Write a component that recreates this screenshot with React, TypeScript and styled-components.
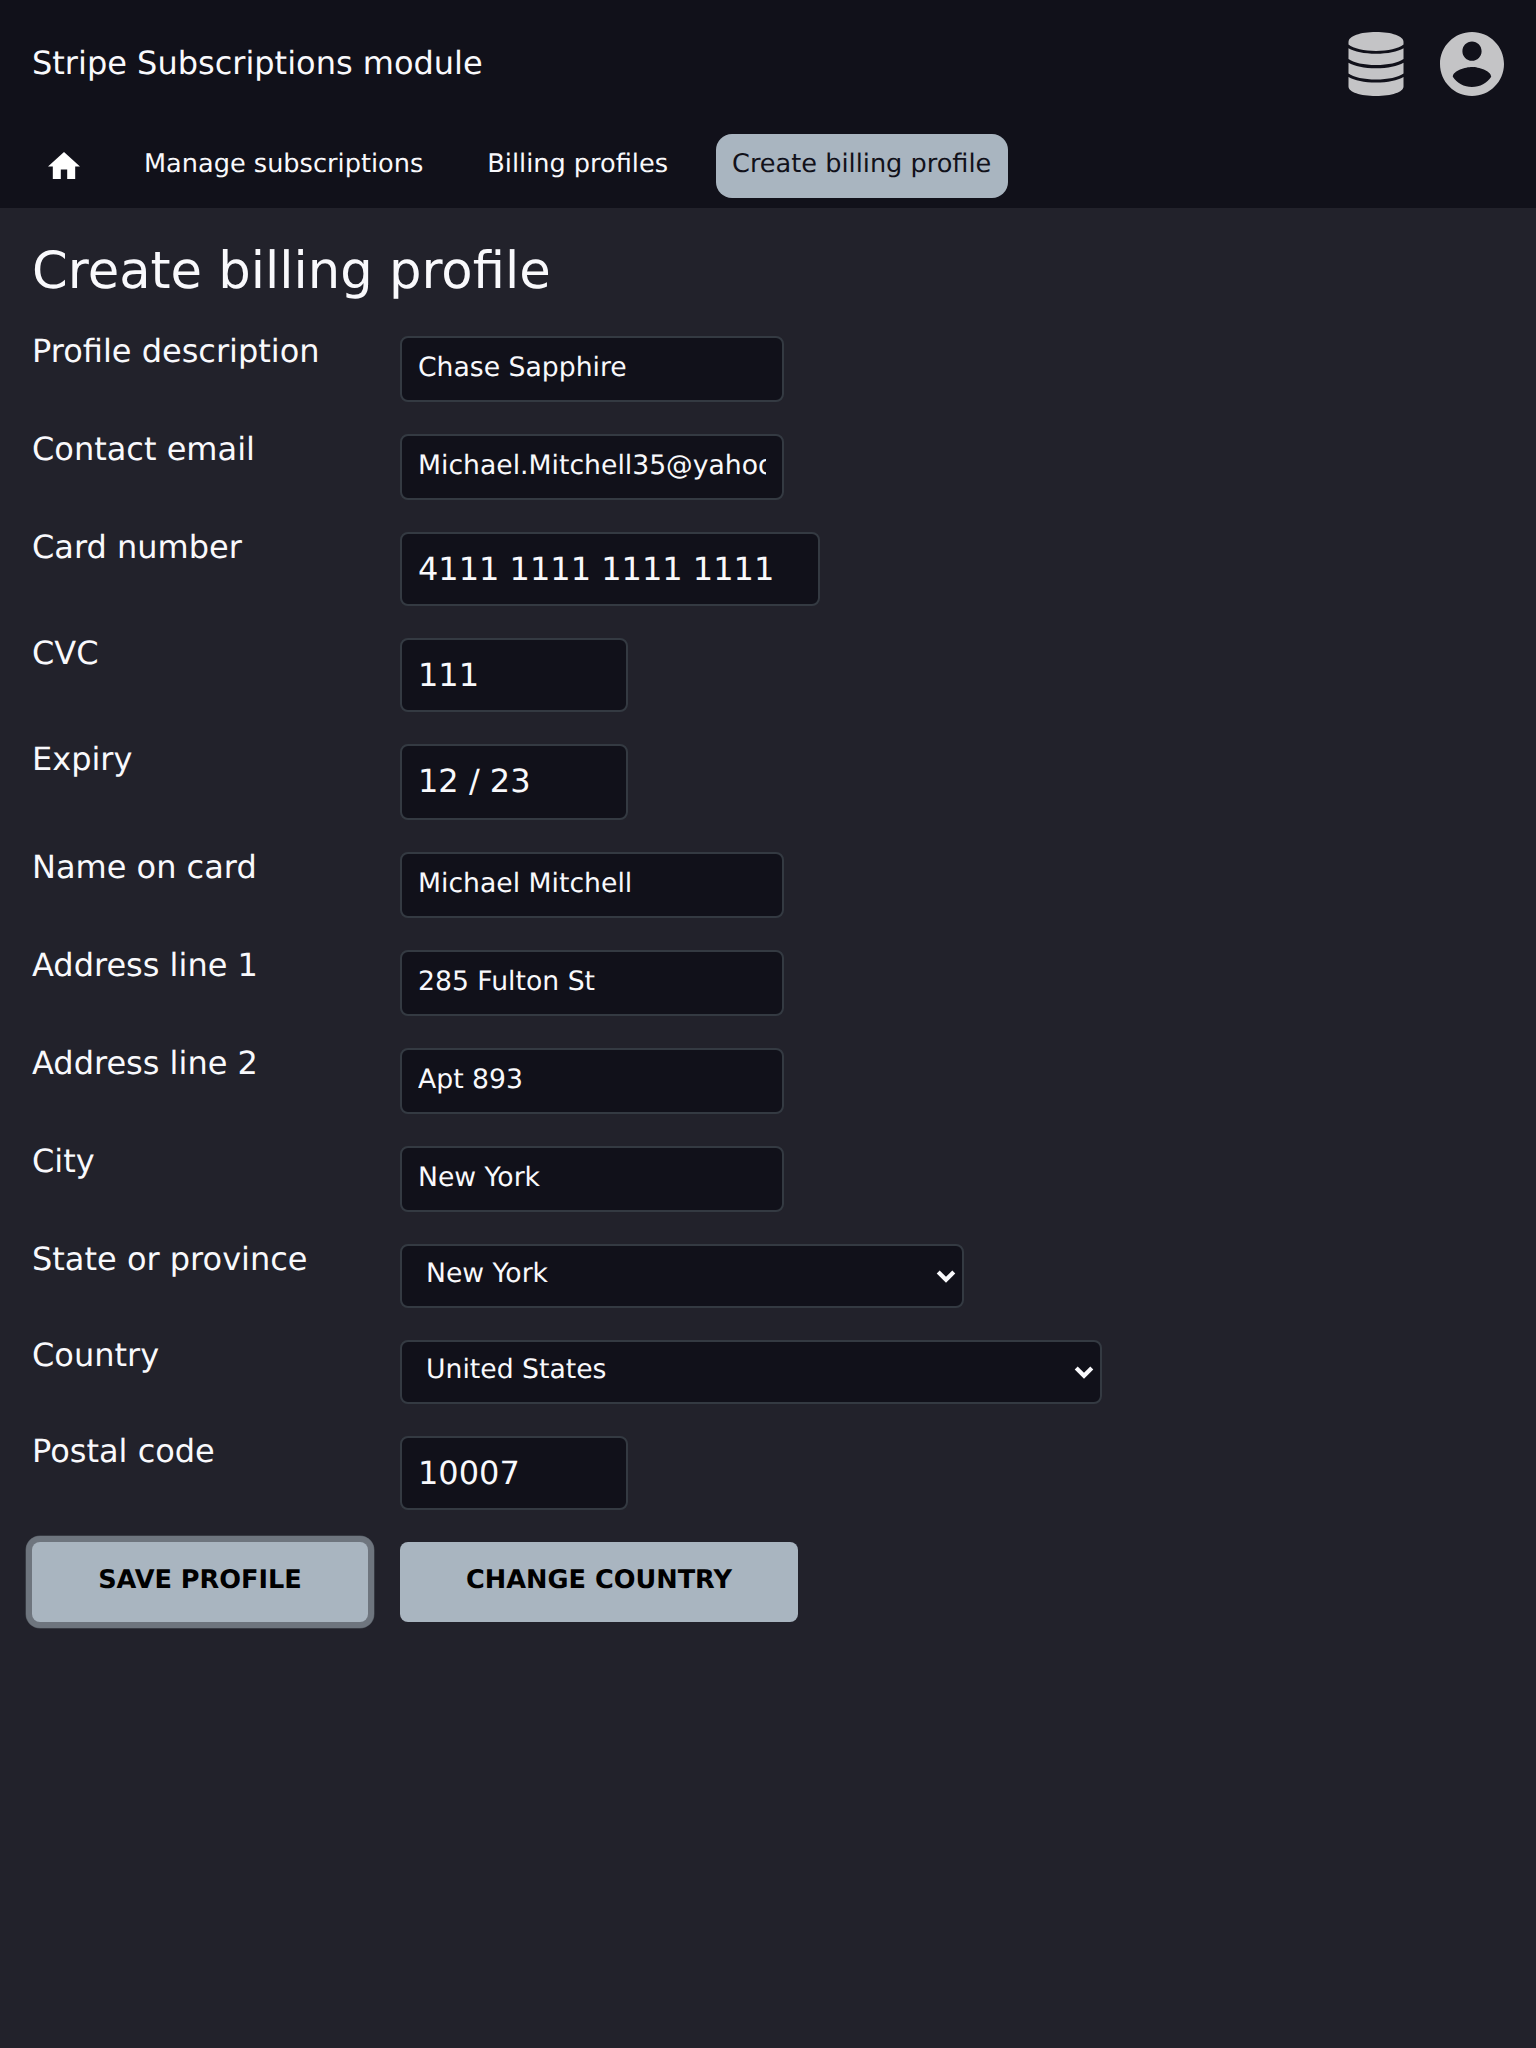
import React from "react";
import styled, { createGlobalStyle } from "styled-components";

const colors = {
  header: "#11111a",
  page: "#22222b",
  border: "#343a42",
  accent: "#a9b5c0",
  ring: "#6e757e",
  text: "#f9f9fc",
  icon: "#c4c4c6",
};

const GlobalStyle = createGlobalStyle`
  *, *::before, *::after { box-sizing: border-box; }
  body {
    margin: 0;
    background: ${colors.page};
    color: ${colors.text};
    font-family: "DejaVu Sans", sans-serif;
    font-size: 32px;
    text-rendering: geometricPrecision;
  }
  input, button { text-rendering: inherit; }
`;

const Page = styled.div`
  min-height: 2048px;
  background: ${colors.page};
`;

const Header = styled.header`
  height: 208px;
  background: ${colors.header};
`;

const TopBar = styled.div`
  display: flex;
  align-items: center;
  justify-content: space-between;
  height: 128px;
  padding: 0 32px;
`;

const AppName = styled.div`
  height: 40px;
  line-height: 38px;
`;

const Icons = styled.div`
  display: flex;
  gap: 36px;
  color: ${colors.icon};

  svg {
    display: block;
    fill: currentColor;
  }
`;

const Nav = styled.nav`
  display: flex;
  gap: 32px;
  padding: 6px 32px 0;
`;

const NavLink = styled.a<{ $active?: boolean }>`
  height: 64px;
  min-width: ${(p) => (p.$active ? "292px" : "0")};
  padding: 15px 16px 0;
  border-radius: 16px;
  font-size: 25.6px;
  line-height: 30px;
  white-space: nowrap;
  text-decoration: none;
  color: ${(p) => (p.$active ? colors.header : colors.text)};
  background: ${(p) => (p.$active ? colors.accent : "transparent")};
`;

const HomeIcon = styled.svg`
  display: block;
  width: 32px;
  height: 27.2px;
  margin-top: 3px;
  fill: #fff;
`;

const Main = styled.main`
  padding: 32px 32px 0;
`;

const Title = styled.h1`
  height: 64px;
  margin: 0 0 32px;
  font-size: 51.2px;
  font-weight: 400;
  line-height: 62px;
`;

const Form = styled.form`
  display: flex;
  flex-direction: column;
  gap: 32px;
`;

const Row = styled.div`
  display: grid;
  grid-template-columns: 368px 1fr;
  align-items: start;
  justify-items: start;
`;

const Label = styled.label`
  line-height: 30px;
`;

const TextInput = styled.input`
  display: block;
  width: 384px;
  height: 66px;
  padding: 14px 16px 17px;
  border: 2px solid ${colors.border};
  border-radius: 8px;
  outline: none;
  background: ${colors.header};
  color: ${colors.text};
  font-family: inherit;
  font-size: 26.667px;
`;

const CardInput = styled(TextInput)<{ $width: number; $height?: number }>`
  width: ${(p) => p.$width}px;
  height: ${(p) => p.$height ?? 74}px;
  padding: 16px 16px ${(p) => (p.$height ?? 74) - 58}px;
  font-size: 32px;
`;

const SelectBox = styled.div<{ $width: number }>`
  display: flex;
  justify-content: space-between;
  width: ${(p) => p.$width}px;
  height: 64px;
  padding: 12px 5px 0 24px;
  border: 2px solid ${colors.border};
  border-radius: 8px;
  background: ${colors.header};
  font-size: 26.667px;
  line-height: 31px;
`;

const Chevron = styled.svg`
  display: block;
  width: 22px;
  height: 14px;
  margin-top: 11px;
  fill: none;
  stroke: ${colors.text};
  stroke-width: 4.2;
`;

const Actions = styled.div`
  display: flex;
  gap: 32px;
`;

const Button = styled.button<{ $width: number; $focused?: boolean }>`
  width: ${(p) => p.$width}px;
  height: 80px;
  padding: 23px 0 27px;
  border: 0;
  border-radius: 8px;
  background: ${colors.accent};
  color: #000;
  font-family: inherit;
  font-size: 25.6px;
  font-weight: 700;
  line-height: 30px;
  text-transform: uppercase;
  box-shadow: ${(p) =>
    p.$focused ? `0 0 0 6px ${colors.ring}, 0 0 0 6.5px #4d535b` : "none"};
`;

type FieldKind = "text" | "card" | "select";

interface Field {
  id: string;
  label: string;
  value: string;
  kind: FieldKind;
  width?: number;
  height?: number;
}

const fields: Field[] = [
  { id: "description", label: "Profile description", value: "Chase Sapphire", kind: "text" },
  { id: "email", label: "Contact email", value: "Michael.Mitchell35@yahoo.com", kind: "text" },
  { id: "number", label: "Card number", value: "4111 1111 1111 1111", kind: "card", width: 420 },
  { id: "cvc", label: "CVC", value: "111", kind: "card", width: 228 },
  { id: "expiry", label: "Expiry", value: "12 / 23", kind: "card", width: 228, height: 76 },
  { id: "name", label: "Name on card", value: "Michael Mitchell", kind: "text" },
  { id: "line1", label: "Address line 1", value: "285 Fulton St", kind: "text" },
  { id: "line2", label: "Address line 2", value: "Apt 893", kind: "text" },
  { id: "city", label: "City", value: "New York", kind: "text" },
  { id: "state", label: "State or province", value: "New York", kind: "select", width: 564 },
  { id: "country", label: "Country", value: "United States", kind: "select", width: 702 },
  { id: "postal", label: "Postal code", value: "10007", kind: "card", width: 228 },
];

function FieldControl({ field }: { field: Field }) {
  if (field.kind === "select") {
    return (
      <SelectBox id={field.id} role="combobox" $width={field.width ?? 564}>
        <span>{field.value}</span>
        <Chevron viewBox="0 0 22 14">
          <path d="M3.200 2.900 11 10.700 18.800 2.900" />
        </Chevron>
      </SelectBox>
    );
  }
  if (field.kind === "card") {
    return (
      <CardInput
        id={field.id}
        defaultValue={field.value}
        spellCheck={false}
        $width={field.width ?? 228}
        $height={field.height}
      />
    );
  }
  return <TextInput id={field.id} defaultValue={field.value} spellCheck={false} />;
}

export default function App() {
  return (
    <Page>
      <GlobalStyle />
      <Header>
        <TopBar>
          <AppName>Stripe Subscriptions module</AppName>
          <Icons>
            <svg width="56" height="64" viewBox="-0.500 0 57 64" preserveAspectRatio="none">
              <path d="M0 10C0 4 12 0 28 0s28 4 28 10v2.600C51 16.500 40 19 28 19S5 16.500 0 12.600z" />
              <path d="M0 16.300C6 19.700 16 21.800 28 21.800s22-2.100 28-5.500V27c-5 3.700-16 6-28 6S5 30.700 0 27z" />
              <path d="M0 30.700C6 34.100 16 36.300 28 36.300s22-2.200 28-5.600v10.700c-5 3.700-16 6-28 6s-23-2.300-28-6z" />
              <path d="M0 45C6 48.400 16 50.600 28 50.600S50 48.400 56 45v9.500C56 60 44 64 28 64S0 60 0 54.500z" />
            </svg>
            <svg width="64" height="64" viewBox="2 2 20 20">
              <path d="M12 2C6.480 2 2 6.480 2 12s4.480 10 10 10 10-4.480 10-10S17.520 2 12 2zm0 3c1.660 0 3 1.340 3 3s-1.340 3-3 3-3-1.340-3-3 1.340-3 3-3zm0 14.200c-2.500 0-4.710-1.280-6-3.220.03-1.990 4-3.080 6-3.080 1.990 0 5.970 1.090 6 3.080-1.290 1.940-3.500 3.220-6 3.220z" />
            </svg>
          </Icons>
        </TopBar>
        <Nav>
          <NavLink>
            <HomeIcon viewBox="2 3 20 17">
              <path d="M10 20v-6h4v6h5v-8h3L12 3 2 12h3v8z" />
            </HomeIcon>
          </NavLink>
          <NavLink>Manage subscriptions</NavLink>
          <NavLink>Billing profiles</NavLink>
          <NavLink $active>Create billing profile</NavLink>
        </Nav>
      </Header>
      <Main>
        <Title>Create billing profile</Title>
        <Form>
          {fields.map((field) => (
            <Row key={field.id}>
              <Label htmlFor={field.id}>{field.label}</Label>
              <FieldControl field={field} />
            </Row>
          ))}
          <Actions>
            <Button type="button" $width={336} $focused>
              Save profile
            </Button>
            <Button type="button" $width={398}>
              Change country
            </Button>
          </Actions>
        </Form>
      </Main>
    </Page>
  );
}
